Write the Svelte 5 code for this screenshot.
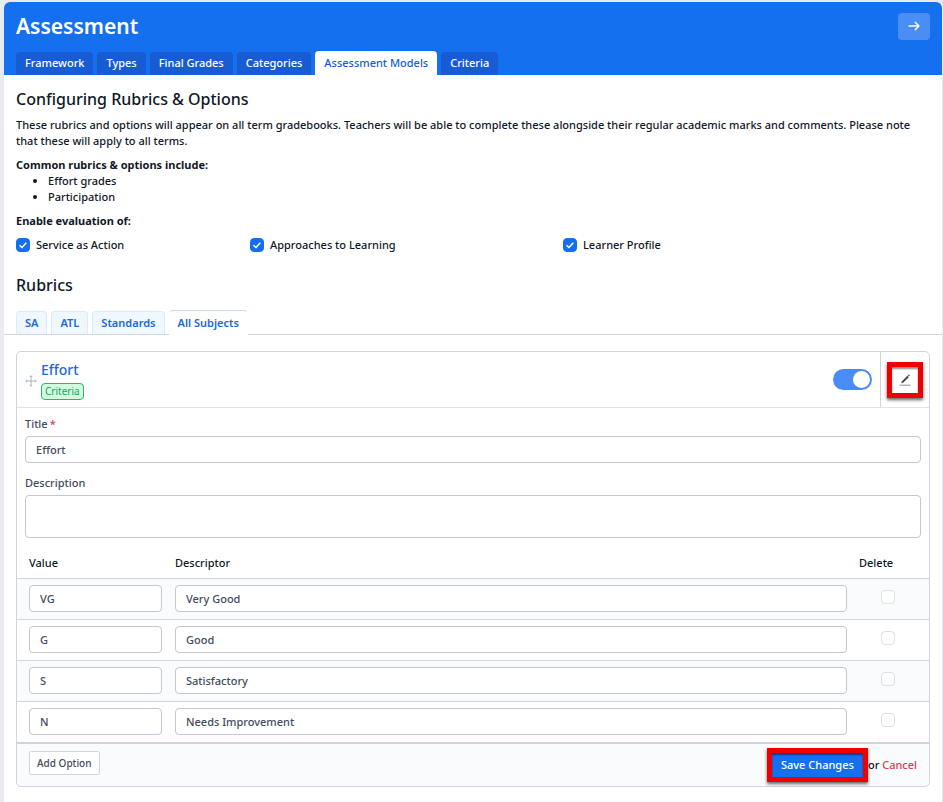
<script lang="ts">
	type Option = { value: string; descriptor: string; remove: boolean };

	const tabs = ["Framework", "Types", "Final Grades", "Categories", "Assessment Models", "Criteria"];
	const subjects = ["SA", "ATL", "Standards", "All Subjects"];

	let activeTab = $state("Assessment Models");
	let activeSubject = $state("All Subjects");
	let enabled = $state(true);
	let title = $state("Effort");
	let description = $state("");

	let evaluations = $state([
		{ name: "Service as Action", checked: true },
		{ name: "Approaches to Learning", checked: true },
		{ name: "Learner Profile", checked: true },
	]);

	let options: Option[] = $state([
		{ value: "VG", descriptor: "Very Good", remove: false },
		{ value: "G", descriptor: "Good", remove: false },
		{ value: "S", descriptor: "Satisfactory", remove: false },
		{ value: "N", descriptor: "Needs Improvement", remove: false },
	]);

	function addOption() {
		options.push({ value: "", descriptor: "", remove: false });
	}
</script>

<div class="page">
	<header>
		<div class="heading">
			<h1>Assessment</h1>
			<button class="next" aria-label="Next">
				<svg width="12" height="10" viewBox="0 0 12 10" fill="none" stroke="currentColor" stroke-width="1.4" stroke-linecap="round" stroke-linejoin="round">
					<path d="M1 5h10M7.2 1.2 11 5 7.2 8.8" />
				</svg>
			</button>
		</div>
		<nav class="tabs">
			{#each tabs as tab}
				<button class:active={tab === activeTab} onclick={() => (activeTab = tab)}>{tab}</button>
			{/each}
		</nav>
	</header>

	<main>
		<section class="intro">
			<h2>Configuring Rubrics &amp; Options</h2>
			<p>
				These rubrics and options will appear on all term gradebooks. Teachers will be able to complete these
				alongside their regular academic marks and comments. Please note that these will apply to all terms.
			</p>
			<div>
				<strong>Common rubrics &amp; options include:</strong>
				<ul>
					<li>Effort grades</li>
					<li>Participation</li>
				</ul>
			</div>
			<strong>Enable evaluation of:</strong>
			<div class="evaluations">
				{#each evaluations as item}
					<label>
						<input type="checkbox" bind:checked={item.checked} />
						{item.name}
					</label>
				{/each}
			</div>
			<h2>Rubrics</h2>
		</section>

		<nav class="subjects">
			{#each subjects as subject}
				<button class:active={subject === activeSubject} onclick={() => (activeSubject = subject)}>
					{subject}
				</button>
			{/each}
		</nav>

		<form class="rubric" onsubmit={(e) => e.preventDefault()}>
			<div class="rubric-head">
				<svg class="move" width="12" height="12" viewBox="0 0 12 12" fill="none" stroke="currentColor" stroke-width="0.8">
					<path d="M6 .8v10.4M.8 6h10.4M4.7 2 6 .7 7.3 2M4.7 10 6 11.3 7.3 10M2 4.7.7 6 2 7.3M10 4.7 11.3 6 10 7.3" />
				</svg>
				<div class="name">
					<h3>Effort</h3>
					<span class="badge">Criteria</span>
				</div>
				<input class="switch" type="checkbox" aria-label="Enable rubric" bind:checked={enabled} />
				<div class="edit">
					<button type="button" class="marked" aria-label="Edit">
						<svg width="12" height="12" viewBox="0 0 12 12">
							<path d="M2.2 9.2 3 7.2 8.4 1.8 9.8 3.2 4.3 8.5Z" fill="#374151" />
							<path d="M8.9 1.3 9.5.7q.5-.4 1 0t0 1l-.5.7Z" fill="#374151" />
							<path d="M.5 11.2h11" stroke="#6b7280" stroke-width="0.8" />
						</svg>
					</button>
				</div>
			</div>

			<div class="fields">
				<label for="title">Title<span class="required">*</span></label>
				<input id="title" class="field" type="text" bind:value={title} />
				<label for="description">Description</label>
				<textarea id="description" class="field" bind:value={description}></textarea>
			</div>

			<table>
				<thead>
					<tr>
						<th class="value">Value</th>
						<th>Descriptor</th>
						<th class="delete">Delete</th>
					</tr>
				</thead>
				<tbody>
					{#each options as option}
						<tr>
							<td class="value"><input class="field" type="text" aria-label="Value" bind:value={option.value} /></td>
							<td><input class="field" type="text" aria-label="Descriptor" bind:value={option.descriptor} /></td>
							<td class="delete"><input type="checkbox" aria-label="Delete" bind:checked={option.remove} /></td>
						</tr>
					{/each}
				</tbody>
			</table>

			<footer>
				<button type="button" class="add" onclick={addOption}>Add Option</button>
				<div class="actions">
					<button type="submit" class="save marked">Save Changes</button>
					<span>or <a href="#cancel">Cancel</a></span>
				</div>
			</footer>
		</form>
	</main>
</div>

<style>
	:global(body) {
		background: #e9ebf0;
	}

	.page {
		--blue: #1570ef;
		--line: #d1d5db;
		--field-line: #c3c7cf;

		box-sizing: border-box;
		min-height: calc(100vh - 2px);
		margin: 2px 1px 0 4px;
		background: #fff;
		border-radius: 6px 6px 0 0;
		overflow: hidden;
		font-family: "Noto Sans", "Open Sans", sans-serif;
		font-size: 11px;
		font-weight: 500;
		line-height: 16px;
		color: #111827;

		& * {
			box-sizing: border-box;
		}
	}

	button,
	input,
	textarea {
		font: inherit;
		color: inherit;
		margin: 0;
	}

	button {
		border: 0;
		padding: 0;
		background: none;
		cursor: pointer;
	}

	h1,
	h2,
	h3,
	p,
	ul {
		margin: 0;
	}

	header {
		padding: 10px 12px 0;
		background: var(--blue);
		color: #fff;
	}

	.heading {
		display: flex;
		justify-content: space-between;
		align-items: center;
		height: 28px;
	}

	h1 {
		font-size: 21px;
		line-height: 28px;
		font-weight: 600;
	}

	.next {
		display: grid;
		place-content: center;
		width: 32px;
		height: 27px;
		border-radius: 4px;
		background: #4a8df5;
	}

	.tabs {
		display: flex;
		align-items: flex-end;
		gap: 4px;
		margin-top: 11px;

		& button {
			height: 23px;
			padding: 0 9px 1px;
			border-radius: 4px 4px 0 0;
			background: #175cd3;
		}

		& .active {
			height: 24px;
			background: #fff;
			color: #175cd3;
		}
	}

	.intro {
		padding: 14px 12px 15px;
	}

	h2 {
		font-size: 16px;
		line-height: 20px;
		font-weight: 500;
	}

	p {
		margin: 8px 0;
	}

	strong {
		display: block;
		font-weight: 700;
	}

	ul {
		padding-left: 32px;
		margin-bottom: 8px;
	}

	.evaluations {
		display: grid;
		grid-template-columns: 234fr 313fr 367fr;
		margin: 8px 0 22px;

		& label {
			display: flex;
			align-items: center;
			gap: 6px;
		}
	}

	input[type="checkbox"]:not(.switch) {
		appearance: none;
		flex: none;
		width: 14px;
		height: 14px;
		border: 1px solid #dcdfe4;
		border-radius: 4px;
		background: #fff;

		&:checked {
			border-color: var(--blue);
			background: var(--blue)
				url("data:image/svg+xml,%3Csvg xmlns='http://www.w3.org/2000/svg' viewBox='0 0 12 12'%3E%3Cpath d='M2.5 6.2 5 8.5 9.3 3.8' fill='none' stroke='white' stroke-width='1.5'/%3E%3C/svg%3E")
				center / 12px no-repeat;
		}
	}

	.subjects {
		display: flex;
		align-items: flex-end;
		gap: 4px;
		padding: 0 12px;
		border-bottom: 1px solid var(--line);

		& button {
			height: 23px;
			padding: 0 8px;
			border: 1px solid #dbeafe;
			border-bottom: 0;
			border-radius: 4px 4px 0 0;
			background: #eff8ff;
			color: #2068d8;
			font-weight: 600;
		}

		& .active {
			height: 25px;
			margin-bottom: -1px;
			background: #fff;
			border-color: #c7d7f5 transparent;
		}
	}

	.rubric {
		margin: 16px 12px;
		border: 1px solid var(--line);
		border-radius: 5px;
	}

	.rubric-head {
		display: flex;
		align-items: center;
		height: 56px;
		padding-left: 8px;
		border-bottom: 1px solid #e0e3e9;
	}

	.move {
		margin: 3px 4px 0 0;
		color: #98a2b3;
	}

	.name {
		flex: 1;
	}

	h3 {
		font-size: 14px;
		line-height: 20px;
		font-weight: 500;
		color: #2068d8;
	}

	.badge {
		display: block;
		width: fit-content;
		margin-top: 3px;
		padding: 0 3px;
		border: 1px solid #32b070;
		border-radius: 4px;
		background: #d1fadf;
		color: #22a05f;
		font-size: 10px;
		font-weight: 400;
		line-height: 15px;
	}

	.switch {
		appearance: none;
		width: 39px;
		height: 21px;
		margin-right: 8px;
		padding: 2px;
		border-radius: 11px;
		background: #d1d5db;

		&::before {
			content: "";
			display: block;
			width: 17px;
			height: 17px;
			border-radius: 50%;
			background: #fff;
		}

		&:checked {
			background: #4a8cf7;
		}

		&:checked::before {
			margin-left: auto;
		}
	}

	.edit {
		display: grid;
		place-content: center;
		align-self: stretch;
		width: 49px;
		border-left: 1px solid var(--line);
	}

	.marked {
		display: grid;
		place-content: center;
		width: 36px;
		height: 36px;
		border: 5px solid #ee0000;
		box-shadow:
			0 2px 3px #0009,
			inset 0 2px 2px #0007;
	}

	.fields {
		display: flex;
		flex-direction: column;
		padding: 8px 8px 0;
		color: #434c5b;

		& label {
			margin-bottom: 4px;
		}
	}

	.required {
		margin-left: 2px;
		color: #e5384f;
	}

	.field {
		display: block;
		width: 100%;
		height: 27px;
		padding: 0 10px;
		border: 1px solid var(--field-line);
		border-radius: 4px;
		background: #fff;
		color: #434c5b;
	}

	#title {
		margin-bottom: 12px;
	}

	textarea.field {
		height: 43px;
		padding: 5px 10px;
		resize: none;
	}

	table {
		width: 100%;
		border-collapse: separate;
		border-spacing: 0;
		table-layout: fixed;
	}

	th {
		height: 40px;
		padding: 9px 0 0;
		text-align: left;
		font-weight: 500;
	}

	td {
		height: 41px;
		padding: 0 0 1px;
		border-top: 1px solid var(--line);
	}

	.value {
		width: 158px;
		padding-left: 12px;
		padding-right: 13px;
	}

	.delete {
		width: 82px;
		padding-left: 12px;
	}

	td.delete {
		padding: 0 0 4px 34px;
	}

	.delete input {
		display: block;
	}

	tbody tr:nth-child(odd) {
		background: #fafbfd;
	}

	footer {
		display: flex;
		justify-content: space-between;
		align-items: flex-start;
		height: 44px;
		padding: 4px 12px 0;
		border-top: 2px solid var(--line);
		border-radius: 0 0 5px 5px;
		background: #fafbfd;
	}

	.add {
		height: 24px;
		margin-top: 3px;
		padding: 0 7px;
		border: 1px solid var(--line);
		border-radius: 2px;
		background: #fff;
		color: #434c5b;
		font-size: 10px;
	}

	.actions {
		display: flex;
		align-items: center;
	}

	.save {
		width: 101px;
		height: 34px;
		background: var(--blue);
		color: #fff;
		white-space: nowrap;
	}

	a {
		color: #e5384f;
		text-decoration: none;
	}
</style>
